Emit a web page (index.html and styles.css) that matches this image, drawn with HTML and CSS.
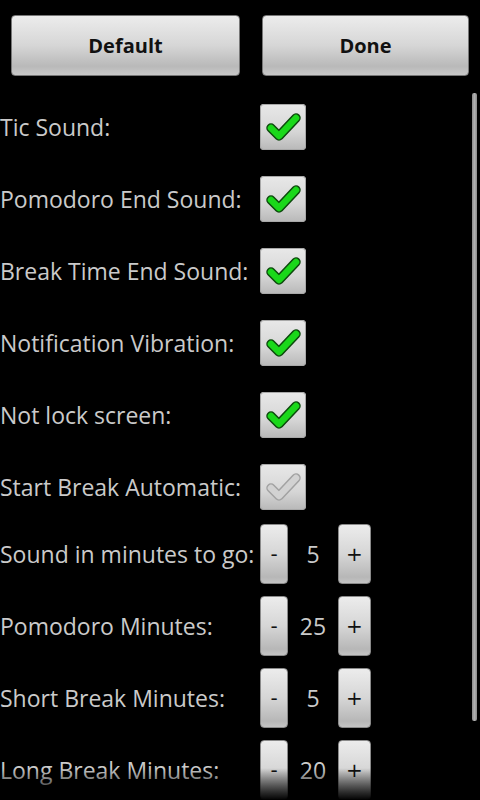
FILE: index.html
```html
<!DOCTYPE html>
<html lang="en">
<head>
    <meta charset="UTF-8">
    <meta name="viewport" content="width=device-width, initial-scale=1.0">
    <title>Settings</title>
    <link rel="stylesheet" href="styles.css">
</head>
<body>
    <div class="top-bar">
        <button class="btn btn-default">Default</button>
        <button class="btn btn-done">Done</button>
    </div>

    <div class="list">
        <div class="row">
            <span class="label">Tic Sound:</span>
            <span class="check"><svg viewBox="0 0 46 46"><path class="mark-out" d="M11 24 L19 32 L36 14"/><path class="mark-in" d="M11 24 L19 32 L36 14"/></svg></span>
        </div>
        <div class="row">
            <span class="label">Pomodoro End Sound:</span>
            <span class="check"><svg viewBox="0 0 46 46"><path class="mark-out" d="M11 24 L19 32 L36 14"/><path class="mark-in" d="M11 24 L19 32 L36 14"/></svg></span>
        </div>
        <div class="row">
            <span class="label">Break Time End Sound:</span>
            <span class="check"><svg viewBox="0 0 46 46"><path class="mark-out" d="M11 24 L19 32 L36 14"/><path class="mark-in" d="M11 24 L19 32 L36 14"/></svg></span>
        </div>
        <div class="row">
            <span class="label">Notification Vibration:</span>
            <span class="check"><svg viewBox="0 0 46 46"><path class="mark-out" d="M11 24 L19 32 L36 14"/><path class="mark-in" d="M11 24 L19 32 L36 14"/></svg></span>
        </div>
        <div class="row">
            <span class="label">Not lock screen:</span>
            <span class="check"><svg viewBox="0 0 46 46"><path class="mark-out" d="M11 24 L19 32 L36 14"/><path class="mark-in" d="M11 24 L19 32 L36 14"/></svg></span>
        </div>
        <div class="row">
            <span class="label">Start Break Automatic:</span>
            <span class="check disabled"><svg viewBox="0 0 46 46"><path class="mark-out" d="M11 24 L19 32 L36 14"/><path class="mark-in" d="M11 24 L19 32 L36 14"/></svg></span>
        </div>

        <div class="row stepper-row">
            <span class="label">Sound in minutes to go:</span>
            <div class="stepper">
                <button class="step minus">-</button>
                <span class="value">5</span>
                <button class="step plus">+</button>
            </div>
        </div>
        <div class="row stepper-row">
            <span class="label">Pomodoro Minutes:</span>
            <div class="stepper">
                <button class="step minus">-</button>
                <span class="value">25</span>
                <button class="step plus">+</button>
            </div>
        </div>
        <div class="row stepper-row">
            <span class="label">Short Break Minutes:</span>
            <div class="stepper">
                <button class="step minus">-</button>
                <span class="value">5</span>
                <button class="step plus">+</button>
            </div>
        </div>
        <div class="row stepper-row">
            <span class="label">Long Break Minutes:</span>
            <div class="stepper">
                <button class="step minus">-</button>
                <span class="value">20</span>
                <button class="step plus">+</button>
            </div>
        </div>

        <!-- scrollbar and bottom fade sit on top of the list -->
        <div class="scrollbar"></div>
        <div class="fade"></div>
    </div>
</body>
</html>
```

FILE: styles.css
```css
body {
    margin: 0;
    background-color: #000;
    font-family: 'Open Sans', 'DejaVu Sans', sans-serif;
    width: 480px;
    height: 800px;
    overflow: hidden;
}

.top-bar {
    display: grid;
    grid-template-columns: 229px 207px;
    column-gap: 22px;
    padding: 15px 0 0 11px;
    height: 61px;
}

.btn {
    font-family: 'Open Sans', 'DejaVu Sans', sans-serif;
    font-size: 20px;
    font-weight: 700;
    color: #111;
    border: 1px solid #777;
    border-radius: 4px;
    background: linear-gradient(#ececec, #d6d6d6 50%, #b9b9b9 85%, #c8c8c8);
    padding: 0;
    margin: 0;
}

.list {
    position: relative;
    margin-top: 15px;
    height: 709px;
}

.row {
    display: flex;
    align-items: center;
    height: 72px;
}

.label {
    width: 260px;
    color: #cacaca;
    font-size: 23px;
    white-space: nowrap;
}

.check {
    display: block;
    width: 46px;
    height: 46px;
    border-radius: 4px;
    background: linear-gradient(#e8e8e8, #d6d6d6 60%, #b8b8b8);
    box-shadow: inset 0 0 0 1px #a8a8a8;
}

.check svg {
    width: 46px;
    height: 46px;
    display: block;
}

.mark-out {
    fill: none;
    stroke: #0c4a0c;
    stroke-width: 9.5;
    stroke-linecap: round;
    stroke-linejoin: round;
}

.mark-in {
    fill: none;
    stroke: #1ad81a;
    stroke-width: 6.5;
    stroke-linecap: round;
    stroke-linejoin: round;
}

.check.disabled .mark-out {
    stroke: #a2a2a2;
}

.check.disabled .mark-in {
    stroke: #d2d2d2;
}

.stepper-row {
    box-sizing: border-box;
    padding: 1px 0 11px;
}

.stepper {
    display: flex;
    align-items: center;
}

.step {
    height: 60px;
    padding: 0;
    margin: 0;
    border: 1px solid #8a8a8a;
    border-radius: 4px;
    background: linear-gradient(#ececec, #d6d6d6 50%, #b7b7b7 90%, #c4c4c4);
    font-family: 'DejaVu Sans', sans-serif;
    font-size: 20px;
    color: #111;
}

.minus {
    width: 28px;
}

.plus {
    width: 33px;
}

.value {
    width: 50px;
    text-align: center;
    color: #cacaca;
    font-size: 23px;
}

.scrollbar {
    position: absolute;
    top: 2px;
    right: 3px;
    width: 5px;
    height: 628px;
    border-radius: 2px;
    background: linear-gradient(90deg, #8a8a8a, #b0b0b0 50%, #8a8a8a);
}

.fade {
    position: absolute;
    left: 0;
    right: 0;
    bottom: 0;
    height: 32px;
    background: linear-gradient(rgba(0, 0, 0, 0), #000);
}
```
